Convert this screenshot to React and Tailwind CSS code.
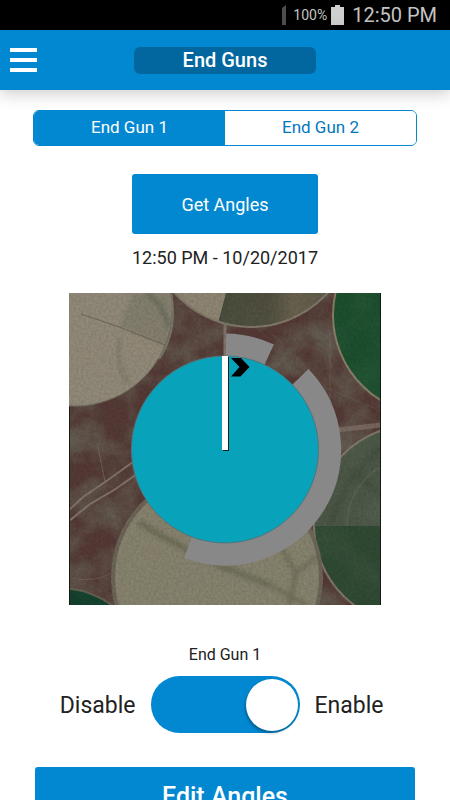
import { useState } from "react";

const tabs = ["End Gun 1", "End Gun 2"];

const StatusBar = () => (
  <div className="flex h-[30px] shrink-0 items-center justify-end bg-black pr-[13px] text-[#c4c4c4]">
    <svg width="4" height="20" viewBox="0 0 4 20" className="mr-[7px]">
      <path d="M0 3 L4 0 V20 H0 Z" fill="#4d4d4d" />
    </svg>
    <span className="text-[14px]">100%</span>
    <svg width="13" height="20" viewBox="0 0 13 20" className="mr-2 ml-1">
      <path d="M4 0 H9 V2 H13 V20 H0 V2 H4 Z" fill="#cfcfcf" />
    </svg>
    <span className="text-[20px]">12:50 PM</span>
  </div>
);

const Header = () => (
  <header className="relative z-10 grid h-[60px] shrink-0 grid-cols-[1fr_auto_1fr] items-center bg-[#0288d1] px-[10px] shadow-[0_3px_16px_rgba(0,0,0,0.22)]">
    <button aria-label="Menu" className="flex w-[27px] flex-col gap-[6px]">
      <span className="h-1 w-full bg-white" />
      <span className="h-1 w-full bg-white" />
      <span className="h-1 w-full bg-white" />
    </button>
    <h1 className="flex h-[27px] w-[182px] items-center justify-center rounded-md bg-[#02679e] text-[20px] font-medium text-white">
      End Guns
    </h1>
  </header>
);

const FieldMap = () => (
  <svg viewBox="0 0 312 312" className="aspect-square w-full max-w-[312px] shrink-0" role="img" aria-label="Pivot field">
    <defs>
      <filter id="patches" x="0" y="0" width="100%" height="100%">
        <feTurbulence type="fractalNoise" baseFrequency="0.03" numOctaves="4" seed="8" />
        <feColorMatrix values="0 0 0 0 0.2  0 0 0 0 0.28  0 0 0 0 0.2  2 0 0 0 -0.7" />
      </filter>
      <filter id="grain" x="0" y="0" width="100%" height="100%">
        <feTurbulence type="fractalNoise" baseFrequency="0.4" numOctaves="2" seed="3" />
        <feColorMatrix values="0 0 0 0 0  0 0 0 0 0  0 0 0 0 0  1 0 0 0 -0.3" />
      </filter>
      <filter id="soft">
        <feGaussianBlur stdDeviation="2" />
      </filter>
      <linearGradient id="mud" x1="152" y1="0" x2="256" y2="0" gradientUnits="userSpaceOnUse">
        <stop offset="0" stopColor="#4a4d3c" />
        <stop offset="0.45" stopColor="#504e3e" />
        <stop offset="0.7" stopColor="#6a624f" />
        <stop offset="1" stopColor="#5f5948" />
      </linearGradient>
      <clipPath id="pivotTop">
        <circle cx="182" cy="-69" r="103" />
      </clipPath>
      <clipPath id="pivotLowerRight">
        <circle cx="345" cy="232" r="100" />
      </clipPath>
    </defs>

    <rect width="312" height="312" fill="#553a36" />
    <rect width="312" height="312" filter="url(#patches)" opacity="0.4" />

    {/* roads */}
    <g fill="none" stroke="#84746a" strokeWidth="2">
      <path d="M0 217 L14 204 L36 189 L64 169" />
      <path d="M0 228 L21 211 L45 197 L68 181" />
      <path d="M28 150 L36 188" strokeWidth="1" opacity="0.6" />
      <path d="M268 137 L312 132" strokeWidth="5" opacity="0.7" />
      <path d="M156 31 V64" strokeWidth="3" />
      <path d="M261 40 V134" strokeWidth="1" opacity="0.4" />
      <path d="M202 40 L258 95 L312 118" strokeWidth="1" opacity="0.25" />
      <path d="M0 285 Q28 290 42 280" strokeWidth="1" opacity="0.4" />
    </g>

    {/* neighbouring fields */}
    <g clipPath="url(#pivotTop)">
      <rect x="100" width="160" height="36" fill="url(#mud)" />
      <path d="M100 0 H157 L148 34 H100 Z" fill="#8f8673" />
    </g>
    <circle cx="182" cy="-69" r="103" fill="none" stroke="#81786a" strokeWidth="2" />
    <circle cx="6" cy="16" r="97" fill="#938a79" stroke="#747061" />
    <path d="M96 54 Q104 36 102 8 L101 0 H64 Q56 20 50 33 Z" fill="#7c7867" opacity="0.6" filter="url(#soft)" />
    <path d="M102 0 Q109 38 90 66" fill="none" stroke="#7b7866" strokeWidth="2" />
    <path d="M12 21 Q53 34 96 52" fill="none" stroke="#6c6656" />
    <path d="M77 0 Q97 14 99 34" fill="none" stroke="#5e6555" strokeWidth="3" filter="url(#soft)" />
    <path d="M49 44 Q46 70 60 91" fill="none" stroke="#716b5c" strokeWidth="5" opacity="0.4" filter="url(#soft)" />
    <circle cx="364" cy="22" r="100" fill="#1c502f" stroke="#8c7e68" strokeWidth="2" />
    <g clipPath="url(#pivotLowerRight)">
      <rect x="245" y="130" width="67" height="103" fill="#4d5848" />
      <path d="M312 155 Q270 190 262 233 M312 202 L285 180" fill="none" stroke="#3a4636" strokeWidth="4" opacity="0.6" filter="url(#soft)" />
      <circle cx="345" cy="232" r="67" fill="none" stroke="#69705d" strokeWidth="2" opacity="0.4" />
      <rect x="245" y="233" width="67" height="79" fill="#304a34" />
    </g>
    <circle cx="345" cy="232" r="100" fill="none" stroke="#817768" strokeWidth="2" />
    <circle cx="148" cy="284" r="104" fill="#87836e" stroke="#6d6457" strokeWidth="4" />
    <g fill="none" stroke="#5f5e4a" opacity="0.6" filter="url(#soft)">
      <path d="M70 229 Q116 260 200 292" strokeWidth="6" />
      <path d="M207 246 L227 280 L250 262 M227 280 L220 312" strokeWidth="4" />
      <path d="M150 274 L200 292 L238 312" strokeWidth="4" />
    </g>
    <circle cx="-10" cy="385" r="90" fill="#12402d" stroke="#66614f" strokeWidth="2" />

    <rect width="312" height="312" filter="url(#patches)" opacity="0.1" />
    <rect width="312" height="312" filter="url(#grain)" opacity="0.2" />
    <path d="M0 114 V312 M312 0 V312" stroke="#131a12" strokeWidth="2" />

    {/* end gun arcs */}
    <g fill="none" stroke="#888888" strokeWidth="23">
      <path d="M157 52 A104.5 104.5 0 0 1 200 62" />
      <path d="M231.2 83.9 A104.5 104.5 0 0 1 119.1 254.3" />
    </g>

    <circle cx="156" cy="156.5" r="93.5" fill="#08a3ba" stroke="#53747a" />
    <rect x="154" y="64" width="6" height="94" fill="#102025" />
    <rect x="153" y="63" width="6" height="94" fill="#ffffff" />
    <path d="M162 65 H172 L180.5 74 L171.5 83.5 H162 L170.5 74 Z" fill="#000000" />
  </svg>
);

export default function App() {
  const [activeTab, setActiveTab] = useState(0);
  const [enabled, setEnabled] = useState(true);

  return (
    <div className="flex h-screen flex-col bg-white font-['Roboto',sans-serif] text-[#212121]">
      <StatusBar />
      <Header />

      <main className="flex flex-1 flex-col items-center overflow-y-auto px-[33px] pt-5 pb-6 [scrollbar-width:none]">
        <div role="tablist" className="flex h-9 w-full shrink-0 overflow-hidden rounded-md border border-[#0288d1]">
          {tabs.map((tab, idx) => (
            <button
              key={tab}
              role="tab"
              aria-selected={idx === activeTab}
              onClick={() => setActiveTab(idx)}
              className={`flex-1 text-[17px] ${
                idx === activeTab ? "bg-[#0288d1] text-white" : "bg-white text-[#0277bd]"
              }`}
            >
              {tab}
            </button>
          ))}
        </div>

        <button className="mt-7 h-[60px] w-[186px] shrink-0 rounded-[3px] bg-[#0288d1] text-[18px] text-white">
          Get Angles
        </button>
        <p className="mt-3 mb-[23px] text-[18px] leading-6">12:50 PM - 10/20/2017</p>

        <FieldMap />

        <p className="mt-[38px] text-[16px] leading-6">{tabs[activeTab]}</p>
        <div className="mt-[9px] grid w-full grid-cols-[1fr_auto_1fr] items-center gap-[15px] text-[23px]">
          <span className="pt-1 text-right">Disable</span>
          <input
            id="end-gun-switch"
            type="checkbox"
            role="switch"
            checked={enabled}
            onChange={(e) => setEnabled(e.target.checked)}
            className="flex h-[57px] w-[149px] appearance-none items-center rounded-full bg-[#9e9e9e] px-[2px] before:size-[52px] before:rounded-full before:bg-white before:shadow-[-1px_2px_3px_rgba(0,0,0,0.3)] before:content-[''] checked:justify-end checked:bg-[#0288d1]"
          />
          <label htmlFor="end-gun-switch" className="pt-1">Enable</label>
        </div>

        <div className="mt-[34px] w-full shrink-0 px-[2px]">
          <button className="h-[60px] w-full rounded-[3px] bg-[#0288d1] text-[25px] font-medium text-white">
            Edit Angles
          </button>
        </div>
      </main>
    </div>
  );
}
